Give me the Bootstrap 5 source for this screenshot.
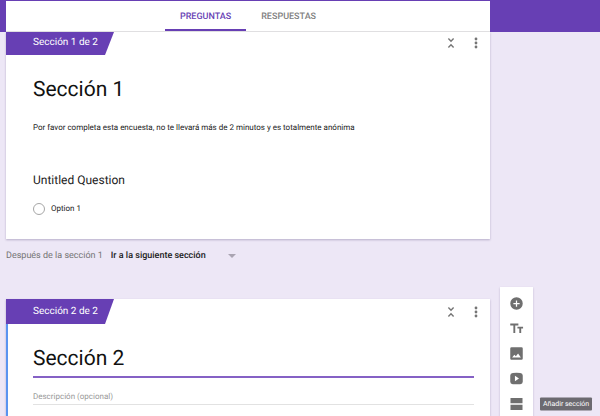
<!DOCTYPE html>
<html lang="es">
<head>
<meta charset="utf-8">
<meta name="viewport" content="width=device-width, initial-scale=1">
<title>Formulario</title>
<link href="https://cdn.jsdelivr.net/npm/bootstrap@5.3.0/dist/css/bootstrap.min.css" rel="stylesheet">
<style>
:root { --purple: #673fb4; --page: #ede7f6; --ink: #212121; --muted: #757575; --rail: 110px; }
body { font-family: Roboto, "Liberation Sans", sans-serif; background: var(--page); color: var(--ink); font-size: 8px; line-height: 12px; text-rendering: geometricPrecision; }
input, select { text-rendering: inherit; }
.top-bar { background: var(--purple); padding: 1px var(--rail) 0 6px; }
.form-tabs { background: #fff; border-bottom: 1px solid #e4e4e4; }
.form-tabs .nav-link { color: #808080; font-size: 9px; font-weight: 500; line-height: 12px; padding: 10px 15px 6px; border-bottom: 2px solid transparent; border-radius: 0; }
.form-tabs .nav-link.active { color: var(--purple); border-color: var(--purple); }
.workspace { padding-left: 6px; gap: 10px; }
.side-rail { width: 100px; }
.sheet { background: #fff; box-shadow: 0 1px 2px rgba(60, 40, 100, .3); padding-bottom: 24px; }
.sheet-active { border-left: 2px solid #5a94f0; padding-bottom: 0; }
.sheet-active .section-tag { margin-left: -2px; }
.sheet-active .sheet-body { padding-left: 25px; }
.section-tag { background: var(--purple); color: #fff; font-size: 10px; font-weight: 400; line-height: 15px; padding: 5px 16px 5px 27px; clip-path: polygon(0 0, 100% 0, calc(100% - 9px) 100%, 0 100%); }
.section-tag.tucked { padding: 3px 16px 5px 27px; }
.sheet-tools { gap: 9px; padding: 5px 6px 0 0; }
.tucked + .sheet-tools { padding-top: 3px; }
.icon-btn { width: 16px; height: 16px; color: var(--muted); }
.sheet-body { padding: 0 16px 0 27px; }
.sheet-title { font-size: 21px; line-height: 30px; font-weight: 400; color: #111; margin: 20px 0 0; }
.sheet-note { margin: 17px 0 0; }
.question-title { font-size: 12px; line-height: 16px; font-weight: 400; margin: 38px 0 15px; }
.choice { gap: 6px; }
.choice .form-check-input { width: 12px; height: 12px; border: 1px solid #a6a6a6; }
.next-row { font-size: 9px; color: var(--muted); gap: 8px; padding: 11px 0 37px; }
.next-select { width: 126px; font-size: 9px; font-weight: 500; line-height: 12px; color: var(--ink); background-color: transparent; background-image: url("data:image/svg+xml,%3Csvg xmlns='http://www.w3.org/2000/svg' viewBox='0 0 8 4'%3E%3Cpath fill='%23aaa4b2' d='M0 0h8L4 4z'/%3E%3C/svg%3E"); background-size: 8px 4px; background-position: right 1px center; }
.title-input { font-size: 21px; line-height: 30px; color: #111; border-bottom: 2px solid #8561c5; padding: 0 0 2px; margin-top: 20px; }
.note-input { font-size: 8px; line-height: 12px; color: var(--ink); border-bottom: 1px solid #e2e2e2; padding: 0 0 1px; margin-top: 13px; }
.note-input::placeholder { color: #999; opacity: 1; }
.tool-strip { width: 33px; background: #fff; box-shadow: 0 1px 2px rgba(60, 40, 100, .25); padding-top: 4px; }
.tool-btn { height: 25px; color: #6f6f6f; }
.hint { left: 100%; top: 50%; transform: translateY(-50%); margin-left: 7px; background: #6c6a70; color: #fff; font-size: 7px; line-height: 13px; padding: 0 3px; border-radius: 1px; }
</style>
<script src="https://cdn.jsdelivr.net/npm/bootstrap@5.3.0/dist/js/bootstrap.bundle.min.js" defer></script>
</head>
<body class="d-flex flex-column min-vh-100">
<header class="top-bar">
  <nav class="form-tabs nav justify-content-center" aria-label="Formulario">
    <a class="nav-link active" aria-current="page" href="#preguntas">PREGUNTAS</a>
    <a class="nav-link" href="#respuestas">RESPUESTAS</a>
  </nav>
</header>
<div class="workspace d-flex flex-grow-1">
  <main class="d-flex flex-column flex-grow-1" id="preguntas">
    <section class="sheet">
      <div class="d-flex justify-content-between align-items-start">
        <div class="section-tag tucked">Sección 1 de 2</div>
        <div class="sheet-tools d-flex">
          <button type="button" class="icon-btn btn p-0 border-0 d-flex align-items-center justify-content-center" aria-label="Contraer sección"><svg width="12" height="12" viewBox="0 0 12 12" fill="none" stroke="currentColor" stroke-width="1.4"><path d="M3.400 1.600 6 4.200l2.600-2.600M3.400 10.400 6 7.800l2.600 2.600"/></svg></button>
          <button type="button" class="icon-btn btn p-0 border-0 d-flex align-items-center justify-content-center" aria-label="Más opciones"><svg width="12" height="12" viewBox="0 0 12 12" fill="currentColor"><circle cx="6" cy="2" r="1.400"/><circle cx="6" cy="6" r="1.400"/><circle cx="6" cy="10" r="1.400"/></svg></button>
        </div>
      </div>
      <div class="sheet-body">
        <h1 class="sheet-title">Sección 1</h1>
        <p class="sheet-note">Por favor completa esta encuesta, no te llevará más de 2 minutos y es totalmente anónima</p>
        <h2 class="question-title">Untitled Question</h2>
        <div class="choice d-flex align-items-center">
          <input class="form-check-input m-0" type="radio" name="q1" id="q1o1">
          <label for="q1o1">Option 1</label>
        </div>
      </div>
    </section>
    <div class="next-row d-flex align-items-center">
      <label for="next">Después de la sección 1</label>
      <select class="next-select form-select border-0 rounded-0 p-0" id="next"><option>Ir a la siguiente sección</option></select>
    </div>
    <section class="sheet sheet-active flex-grow-1">
      <div class="d-flex justify-content-between align-items-start">
        <div class="section-tag">Sección 2 de 2</div>
        <div class="sheet-tools d-flex">
          <button type="button" class="icon-btn btn p-0 border-0 d-flex align-items-center justify-content-center" aria-label="Contraer sección"><svg width="12" height="12" viewBox="0 0 12 12" fill="none" stroke="currentColor" stroke-width="1.4"><path d="M3.400 1.600 6 4.200l2.600-2.600M3.400 10.400 6 7.800l2.600 2.600"/></svg></button>
          <button type="button" class="icon-btn btn p-0 border-0 d-flex align-items-center justify-content-center" aria-label="Más opciones"><svg width="12" height="12" viewBox="0 0 12 12" fill="currentColor"><circle cx="6" cy="2" r="1.400"/><circle cx="6" cy="6" r="1.400"/><circle cx="6" cy="10" r="1.400"/></svg></button>
        </div>
      </div>
      <div class="sheet-body">
        <input class="title-input d-block w-100 border-top-0 border-start-0 border-end-0 bg-transparent" type="text" value="Sección 2" aria-label="Título de la sección">
        <input class="note-input d-block w-100 border-top-0 border-start-0 border-end-0 bg-transparent" type="text" placeholder="Descripción (opcional)" aria-label="Descripción">
      </div>
    </section>
  </main>
  <aside class="side-rail flex-shrink-0 align-self-end">
    <div class="tool-strip d-flex flex-column">
      <button type="button" class="tool-btn btn p-0 border-0 rounded-0 d-flex align-items-center justify-content-center" aria-label="Añadir pregunta"><svg width="15" height="15" viewBox="0 0 24 24" fill="currentColor"><path d="M12 2a10 10 0 1 0 0 20 10 10 0 0 0 0-20zm5 11h-4v4h-2v-4H7v-2h4V7h2v4h4z"/></svg></button>
      <button type="button" class="tool-btn btn p-0 border-0 rounded-0 d-flex align-items-center justify-content-center" aria-label="Añadir título"><svg width="15" height="15" viewBox="0 0 24 24" fill="currentColor"><path d="M2 4v3h5v12h3V7h5V4zM22.500 9h-9v3h3v7h3v-7h3z"/></svg></button>
      <button type="button" class="tool-btn btn p-0 border-0 rounded-0 d-flex align-items-center justify-content-center" aria-label="Añadir imagen"><svg width="15" height="15" viewBox="0 0 24 24" fill="currentColor"><path d="M22 20V4a2 2 0 0 0-2-2H4a2 2 0 0 0-2 2v16c0 1.100.9 2 2 2h16a2 2 0 0 0 2-2zM8.500 14l2.500 2.500 3.500-4.500 4.500 6.500H5z"/></svg></button>
      <button type="button" class="tool-btn btn p-0 border-0 rounded-0 d-flex align-items-center justify-content-center" aria-label="Añadir vídeo"><svg width="15" height="15" viewBox="0 0 24 24" fill="currentColor"><path d="M6 3Q12 2.500 18 3q4 .3 4 4v10q0 3.700-4 4-6 .5-12 0-4-.3-4-4V7q0-3.700 4-4zM9.500 7.500v9l6.500-4.500z"/></svg></button>
      <div class="position-relative d-grid">
        <button type="button" class="tool-btn btn p-0 border-0 rounded-0 d-flex align-items-center justify-content-center" aria-labelledby="hint-section"><svg width="13" height="12" viewBox="0 0 13 12" fill="currentColor"><path d="M.5 0h12v5.300H.5zM.5 6.700h12V12H.5z"/></svg></button>
        <span class="hint position-absolute text-nowrap" id="hint-section" role="tooltip">Añadir sección</span>
      </div>
    </div>
  </aside>
</div>
</body>
</html>
